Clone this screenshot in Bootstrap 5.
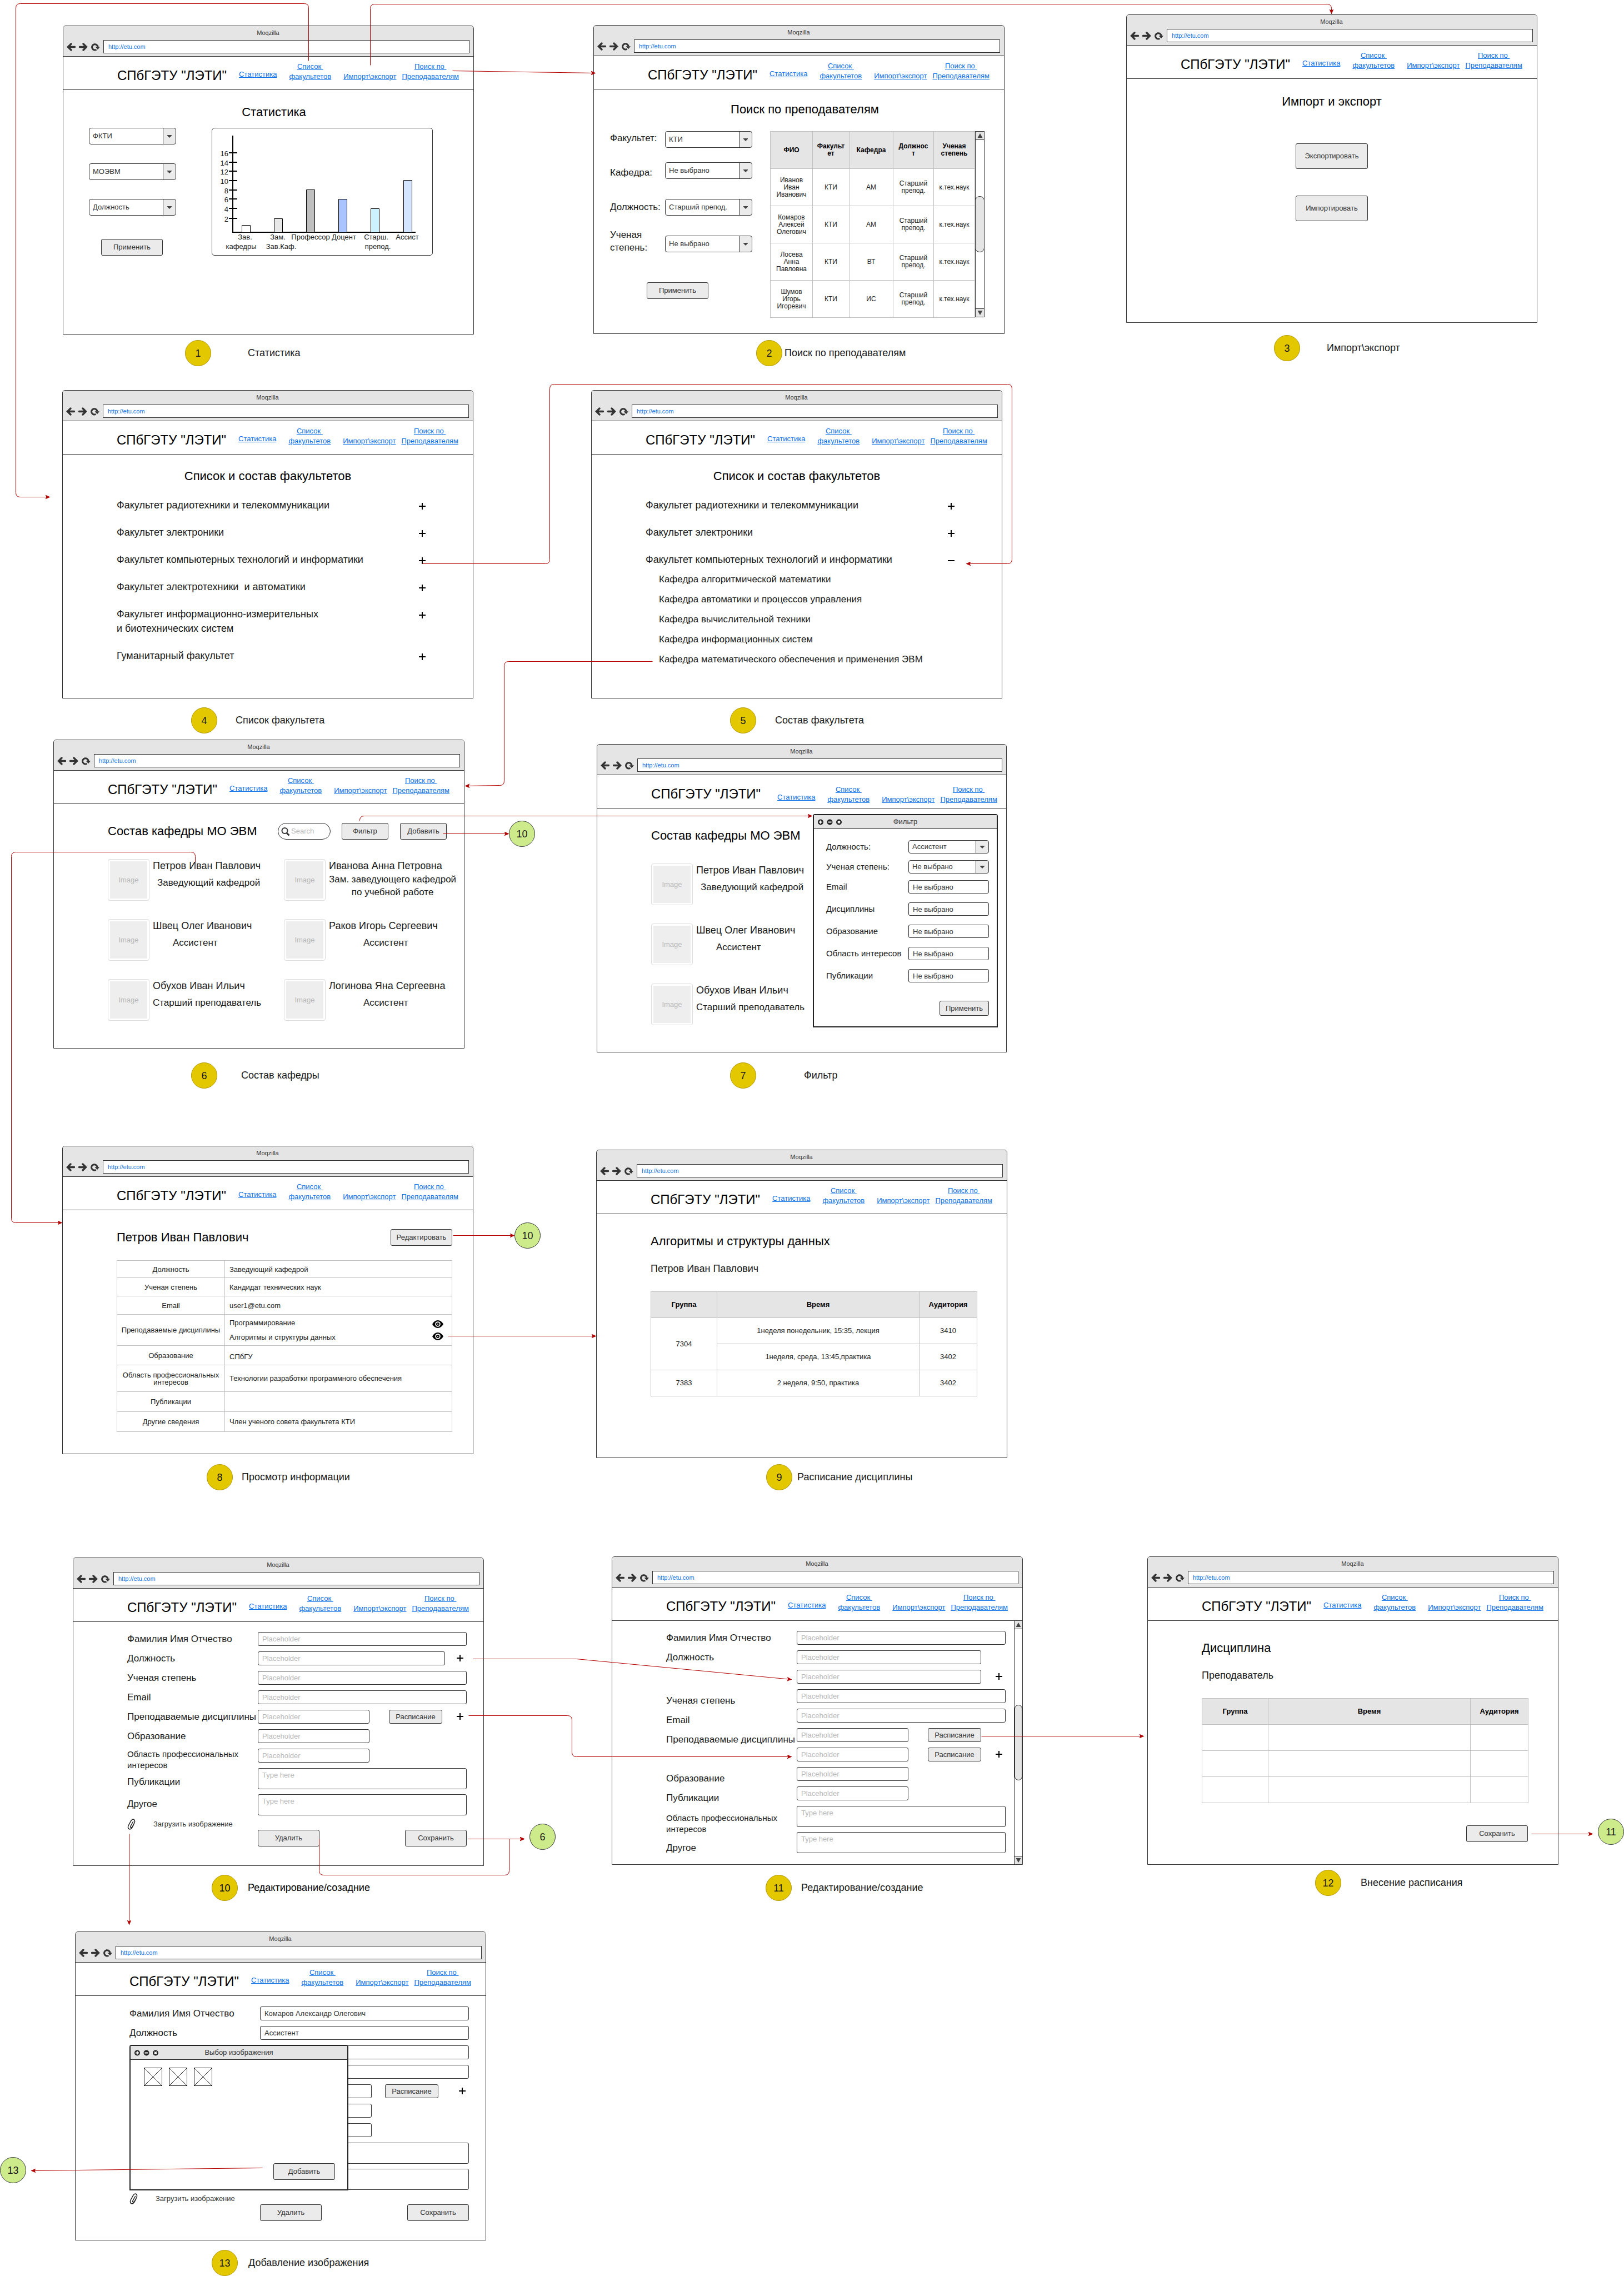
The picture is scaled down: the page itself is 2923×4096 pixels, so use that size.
<!DOCTYPE html>
<html lang="ru">
<head>
<meta charset="utf-8">
<meta name="viewport" content="width=device-width, initial-scale=1">
<title>Макеты экранов</title>
<link href="https://cdn.jsdelivr.net/npm/bootstrap@5.3.0/dist/css/bootstrap.min.css" rel="stylesheet">
<style>
:root{--ink:#333;--face:#ebebeb;--chrome:#e5e5e5;--rule:#c0c0c0;--url:#0a70e8}
body{font-family:"Liberation Sans",Arial,sans-serif;font-size:13px;line-height:18px;color:#1a1a1a;background:#fff}
.board{position:relative;min-height:4096px;overflow:hidden}
svg{display:block;flex:none}
button{font-family:inherit}

/* browser windows on the canvas */
.win{position:absolute;width:740px;height:555px;border:1px solid var(--ink);border-radius:5px 5px 0 0;background:#fff;--bs-card-cap-bg:var(--chrome)}
#w1{left:113px;top:46px;height:556px} #w2{left:1068px;top:45px;height:556px} #w3{left:2027px;top:26px}
#w4{left:112px;top:702px} #w5{left:1064px;top:702px}
#w6{left:96px;top:1331px;height:556px} #w7{left:1074px;top:1339px;width:738px}
#w8{left:112px;top:2062px} #w9{left:1073px;top:2069px}
#w10{left:131px;top:2803px} #w11{left:1101px;top:2801px} #w12{left:2065px;top:2801px}
#w13{left:135px;top:3476px;height:556px}
.win>.card-header{padding:0 7px 5px 6px;border-bottom:1px solid var(--ink);border-radius:4px 4px 0 0}
.win-title{height:25px;line-height:25px;font-size:11px;text-align:center;color:var(--ink)}
.tools{gap:6px;height:24px}
.ico{border:0;background:none;padding:0;color:var(--ink)}
.win .address{height:24px;min-height:0;padding:0 8px;border:1px solid var(--ink);border-radius:0;font-size:11px;color:var(--url);background:#fff}
.site{height:60px;padding:0 0 14px 97px;border-bottom:1px solid var(--ink);gap:22px;flex:none}
.logo{font-size:24px;line-height:20px;padding-bottom:1px;color:#000;text-decoration:none;white-space:nowrap}
.site a:not(.logo){color:var(--url);text-decoration:underline;text-align:center;white-space:nowrap;line-height:18px}
.site a.tight{margin-left:-12px}
.site a.first{padding-bottom:4px}
#w7 .site{padding-bottom:6px}
#w7 .logo{padding-bottom:9px;margin-right:8px}

/* text levels */
.t-page{font-size:22px;line-height:28px;font-weight:400;margin:0;color:#000}
.t-sub{font-size:18px;line-height:24px;font-weight:400;margin:0;color:#1a1a1a}

/* controls */
.win .btn{--bs-btn-font-size:13px;--bs-btn-line-height:18px;--bs-btn-padding-x:0;--bs-btn-padding-y:0;--bs-btn-color:#333;--bs-btn-bg:var(--face);--bs-btn-border-color:var(--ink);--bs-btn-border-radius:3px;width:111px;height:30px;flex:none}
.win .field{height:25px;min-height:0;padding:0 7px;border:1px solid var(--ink);border-radius:3px;font-size:13px;line-height:18px;color:#333;background-color:#fff}
.win .field::placeholder{color:#b8b8b8}
.win textarea.field{height:38px;padding-top:3px;resize:none;overflow:hidden}
.win .pick{height:30px;min-height:0;padding:0 26px 0 6px;border:1px solid var(--ink);border-radius:4px;font-size:13px;color:#333;
 background:url("data:image/svg+xml,%3Csvg xmlns='http://www.w3.org/2000/svg' width='22' height='10'%3E%3Cpath d='M7 3h8v1l-4 4-4-4z' fill='%23444'/%3E%3C/svg%3E") right center/22px 10px no-repeat,
 linear-gradient(#333,#333) right 22px top 0/1px 100% no-repeat,
 linear-gradient(#ebebeb,#ebebeb) right top/22px 100% no-repeat #fff}
.plus{border:0;background:none;padding:0;width:14px;height:14px;color:#000;flex:none}

/* bars and tables */
.sbar{width:17px;border:1px solid var(--ink);background:#fff;flex:none}
.sbar button{border:0;padding:0;height:15px;width:100%;background:var(--chrome)}
.sbar button:first-child{border-bottom:1px solid var(--ink)}
.sbar button:last-child{border-top:1px solid var(--ink);margin-top:auto}
.sbar button svg{margin:auto}
.sbar i{border:1px solid var(--ink);border-radius:8px;background:var(--chrome);margin:101px -1px 0;height:101px}
.grid{border-collapse:collapse;table-layout:fixed;margin:0;color:#1a1a1a}
.grid th,.grid td{border:1px solid var(--rule);padding:0;text-align:center;vertical-align:middle}
.grid thead th{background:var(--chrome);font-weight:700;color:#000}

/* statistics */
.stat{padding:26px 0 0 46px}
.stat .t-page,.find .t-page{text-align:center}
.stat .t-page{margin-left:-26px;margin-bottom:14px}
.stat form{width:157px;gap:34px;margin-right:64px}
.stat form .btn{margin:8px 0 0 22px}
.chart{border:1px solid var(--ink);border-radius:5px}

/* teacher search */
.find{padding:22px 0 0 29px}
.find .t-page{margin-left:-8px;margin-bottom:14px}
.find-labels{width:99px;gap:16px}
.find-labels label{height:46px;font-size:17px;line-height:23px;white-space:nowrap}
.find-picks{width:157px;padding-top:11px}
.find-picks .pick+.pick{margin-top:36px}
.find-picks .pick:nth-child(2){margin-top:26px}
.find .btn{margin:51px 0 0 66px}
.found{margin:11px 0 0 32px;height:335px}
.found .grid{width:368px;font-size:12px;line-height:13px}
.found thead tr{height:67px}
.found tbody tr{height:67px}

.port{padding-top:27px}
.port .btn{width:130px;height:46px;margin-top:48px}
.port .t-page+.btn{margin-top:61px}

/* faculties */
.facs{padding:25px 84px 0 97px}
.facs .t-page{text-align:center;margin:0 -84px 25px -97px}
.facs ul{list-style:none;margin:0;padding:0}
.facs>ul{display:grid;gap:23px}
.facs li{font-size:18px;line-height:26px}
.facs .plus{margin-top:8px}
.facs .deps li{font-size:17px;line-height:36px;white-space:nowrap}
.facs .deps{margin:5px 0 0 24px}

/* staff */
.staff{padding:34px 0 0 97px}
.staff-head{height:30px;padding-right:31px;margin-bottom:35px}
.win .staff-head .btn{width:84px}
.staff-head .btn+.btn{margin-left:21px}
.seek{width:95px;height:30px;border:1px solid var(--ink);border-radius:15px;padding:0 5px;gap:2px;margin-right:20px}
.seek input{border:0;padding:0;width:60px;font-size:13px;background:none}
.seek input::placeholder{color:#b8b8b8;opacity:1}
.people{display:grid;grid-template-columns:317px 1fr;gap:33px 0}
.person{gap:6px;height:75px}
.pic{width:75px;height:75px;flex:none;border:1px solid #ddd;border-radius:4px;padding:3px}
.pic span{display:grid;place-items:center;height:100%;background:#eee;color:#b8b8b8;font-size:13px}
.person .post{font-size:17px;line-height:23px;margin:7px 0 0;white-space:nowrap}
.person .t-sub{white-space:nowrap}
.person .post.two{margin-top:1px;text-align:center}
.in-s{padding-left:8px}.in-m{padding-left:36px}.in-l{padding-left:62px}

/* dialogs above a window */
.dlg{position:absolute;border:2px solid #222;border-radius:4px 4px 0 0;background:#fff}
.dlg-head{position:relative;height:25px;border-bottom:1px solid #222;background:var(--chrome);line-height:24px;text-align:center;color:#333}
.dlg-head .dots{position:absolute;left:6px;top:7px}
#filter{left:388px;top:125px;width:333px;height:384px}
#filter form{padding:20px 14px 0 22px;gap:12px}
#filter label{width:148px;font-size:15px;line-height:24px;white-space:nowrap;flex:none}
#filter .field,#filter .pick{height:24px}
#filter .spaced{margin-top:4px}
#filter .btn{width:89px;height:27px;margin-top:21px}
#images{left:97px;top:203px;width:394px;height:262px}
#images .thumbs{padding:14px 0 0 24px;gap:12px}
#images .btn{margin:auto 22px 17px auto}

/* teacher profile */
.profile{padding:34px 37px 0 97px}
.profile-head{height:30px;margin-bottom:26px}
.facts{width:100%;line-height:13px}
.facts th{font-weight:400;width:194px}
.facts td{text-align:left;padding-left:8px}
.facts .two-lines{line-height:26px}
.facts .two-lines svg{margin-right:15px}

/* timetable */
.times{padding:35px 54px 0 97px}
.times .t-sub{margin:23px 0 29px}
.times .grid{width:587px}
.times .grid tr{height:47px}
.times .btn{margin-top:40px}

/* edit form */
.edit{padding:18px 30px 0 97px;gap:10px}
.line{height:25px}
.line-tall{height:37px}
.line>label,.line-tall>label{width:235px;font-size:17px;line-height:25px;white-space:nowrap;flex:none}
.line>label.small-lbl,.line-tall>label.small-lbl{font-size:15px;line-height:20px}
label.drop5{padding-top:5px}label.drop8{padding-top:8px}label.drop12{padding-top:12px}label.drop16{padding-top:16px}
.win .w-post{width:337px}
.win .w-half{width:201px;flex:none}
.win .line .btn{width:96px;height:25px;margin-left:35px}
.line .plus{margin:5px 5px 0 auto}
.attach{border:0;background:none;padding:0;width:235px;height:20px;gap:32px;color:#333;flex:none}
.edit-end{margin-top:-3px}
.edit-end .btn{margin-top:20px}
#w11 .edit{padding:18px 15px 0 97px}
#w11 .w-post{width:332px}
#w11 .sbar{width:15px;border-width:0 0 0 1px}
#w11 .sbar i{margin:136px 0 0;height:136px}
#w13 .edit{padding-top:19px}
#w13 .line .btn{margin-left:24px}

/* captions and links to other screens */
.tag{position:absolute;font-size:18px;line-height:47px;white-space:nowrap;color:#1a1a1a}
.num{width:47px;height:47px;border:1px solid #b09500;border-radius:50%;background:#e3c800;text-align:center;line-height:47px;flex:none}
.num.go{position:absolute;font-size:18px;background:#cdeb8b;border-color:#36393d}
#t1{left:333px;top:612px;gap:66px} #t2{left:1361px;top:612px;gap:4px} #t3{left:2293px;top:603px;gap:48px}
#t4{left:344px;top:1273px;gap:33px} #t5{left:1314px;top:1273px;gap:34px}
#t6{left:344px;top:1912px;gap:43px} #t7{left:1314px;top:1912px;gap:86px}
#t8{left:372px;top:2635px;gap:16px} #t9{left:1379px;top:2635px;gap:9px}
#t10{left:381px;top:3374px;gap:18px;color:#000} #t11{left:1378px;top:3374px;gap:17px} #t12{left:2367px;top:3365px;gap:35px}
#t13{left:381px;top:4049px;gap:19px}
#g10a{left:916px;top:1477px} #g10b{left:926px;top:2200px} #g6{left:953px;top:3282px} #g11{left:2876px;top:3273px} #g13{left:0;top:3882px}
.arrows{position:absolute;left:0;top:0;pointer-events:none}
</style>
<script src="https://cdn.jsdelivr.net/npm/bootstrap@5.3.0/dist/js/bootstrap.bundle.min.js"></script>
</head>
<body>
<svg width="0" height="0" class="position-absolute" aria-hidden="true">
 <symbol id="i-back" viewBox="0 0 16 15"><path d="M8 2 2.500 7.500 8 13M3 7.500h11.500" fill="none" stroke="currentColor" stroke-width="3.400" stroke-linecap="round"/></symbol>
 <symbol id="i-fwd" viewBox="0 0 16 15"><path d="M8 2l5.500 5.500L8 13M13 7.500H1.500" fill="none" stroke="currentColor" stroke-width="3.400" stroke-linecap="round"/></symbol>
 <symbol id="i-load" viewBox="0 0 16 15"><path d="M9.500 12.300A5.200 5.200 0 1 1 12 7.500" fill="none" stroke="currentColor" stroke-width="3"/><path d="M7.500 7.200H16l-4 5z" fill="currentColor"/></symbol>
 <symbol id="i-plus" viewBox="0 0 14 14"><path d="M1 7h12M7 1v12" stroke="currentColor" stroke-width="2"/></symbol>
 <symbol id="i-minus" viewBox="0 0 14 14"><path d="M1 7h12" stroke="currentColor" stroke-width="2"/></symbol>
 <symbol id="i-up" viewBox="0 0 10 8"><path d="M5 0l4.500 8h-9z" fill="#444"/></symbol>
 <symbol id="i-down" viewBox="0 0 10 8"><path d="M5 8L.5 0h9z" fill="#444"/></symbol>
 <symbol id="i-eye" viewBox="0 0 20 14"><path d="M0 7Q4 0 10 0t10 7q-4 7-10 7T0 7z"/><circle cx="10" cy="7" r="4.800" fill="#fff"/><circle cx="10" cy="7" r="3"/><circle cx="10" cy="7" r="1" fill="#fff"/></symbol>
 <symbol id="i-clip" viewBox="0 0 15 20"><path d="M10.500 5.500 6 13.500q-.8 2 .5 2.500t2.300-1L13 7.500Q14.500 3 12 1.500T7 3.500L2.300 12Q.3 16.500 3 18.300t5.300-1.500L11.500 11" fill="none" stroke="#222" stroke-width="1.500" stroke-linecap="round"/></symbol>
 <symbol id="i-dots" viewBox="0 0 46 11"><g fill="#222"><circle cx="6" cy="5.500" r="5"/><circle cx="22.500" cy="5.500" r="5"/><circle cx="39" cy="5.500" r="5"/></g><path d="M3 5.500h6M6 2.500v6M19.500 5.500h6M37 3.500l4 4M41 3.500l-4 4" stroke="#fff" stroke-width="1.800"/></symbol>
 <symbol id="i-cross" viewBox="0 0 33 33"><path d="M.5.5h32v32H.5zM.5.5l32 32M32.500.5l-32 32" fill="none" stroke="#222"/></symbol>
</svg>

<!-- title bar, address bar and site menu shared by every window -->
<template id="browser">
 <div class="card-header"><div class="win-title">Moqzilla</div>
  <div class="tools d-flex align-items-center">
   <button class="ico" aria-label="Назад"><svg width="16" height="15"><use href="#i-back"/></svg></button>
   <button class="ico" aria-label="Вперёд"><svg width="16" height="15"><use href="#i-fwd"/></svg></button>
   <button class="ico" aria-label="Обновить"><svg width="16" height="15"><use href="#i-load"/></svg></button>
   <input class="form-control address" aria-label="Адрес" value="http://etu.com">
  </div>
 </div>
 <nav class="site d-flex align-items-end"><a class="logo" href="#w1">СПбГЭТУ "ЛЭТИ"</a><a class="first" href="#w1">Статистика</a><a href="#w4">Список&nbsp;<br>факультетов</a><a href="#w3">Импорт\экспорт</a><a class="tight" href="#w2">Поиск по&nbsp;<br>Преподавателям</a></nav>
</template>

<main class="board">

<section class="card win" id="w1">
 <div class="stat">
  <h2 class="t-page">Статистика</h2>
  <div class="d-flex">
   <form class="d-flex flex-column">
    <select class="form-select pick" aria-label="Факультет"><option>ФКТИ</option></select>
    <select class="form-select pick" aria-label="Кафедра"><option>МОЭВМ</option></select>
    <select class="form-select pick" aria-label="Должность"><option>Должность</option></select>
    <button type="button" class="btn">Применить</button>
   </form>
   <svg class="chart" width="398" height="230" font-size="13" fill="#1a1a1a">
    <path d="M37 13v174h329M30 44h15M30 61h15M30 77h15M30 94h15M30 111h15M30 127h15M30 144h15M30 162h15" fill="none" stroke="#000" stroke-width="2"/>
    <g text-anchor="end"><text x="29" y="50">16</text><text x="29" y="67">14</text><text x="29" y="83">12</text><text x="29" y="100">10</text><text x="29" y="117">8</text><text x="29" y="133">6</text><text x="29" y="150">4</text><text x="29" y="168">2</text></g>
    <g stroke="#000"><path d="M53.500 174.500h15v13h-15z" fill="#fff"/><path d="M111.500 162.500h15v25h-15z" fill="#e8e8e8"/><path d="M169.500 110.500h15v77h-15z" fill="#bfbfbf"/><path d="M227.500 127.500h15v60h-15z" fill="#a9c4ff"/><path d="M285.500 144.500h15v43h-15z" fill="#ccf2ff"/><path d="M344.500 93.500h15v94h-15z" fill="#d4e5ff"/></g>
    <g text-anchor="middle"><text x="59" y="200">Зав.</text><text x="52" y="217">кафедры</text><text x="118" y="200">Зам.</text><text x="124" y="217">Зав.Каф.</text><text x="177" y="200">Профессор</text><text x="237" y="200">Доцент</text><text x="295" y="200">Старш.</text><text x="298" y="217">препод.</text><text x="351" y="200">Ассист</text></g>
   </svg>
  </div>
 </div>
</section>

<section class="card win" id="w2">
 <div class="find">
  <h2 class="t-page">Поиск по преподавателям</h2>
  <div class="d-flex align-items-start">
   <form>
    <div class="d-flex">
     <div class="find-labels d-flex flex-column">
      <label class="d-flex align-items-center" for="f1">Факультет:</label>
      <label class="d-flex align-items-center" for="f2">Кафедра:</label>
      <label class="d-flex align-items-center" for="f3">Должность:</label>
      <label class="d-flex align-items-center" for="f4"><span>Ученая<br>степень:</span></label>
     </div>
     <div class="find-picks">
      <select class="form-select pick" id="f1"><option>КТИ</option></select>
      <select class="form-select pick" id="f2"><option>Не выбрано</option></select>
      <select class="form-select pick" id="f3"><option>Старший препод.</option></select>
      <select class="form-select pick" id="f4"><option>Не выбрано</option></select>
     </div>
    </div>
    <button type="button" class="btn">Применить</button>
   </form>
   <div class="found d-flex">
    <table class="grid">
     <colgroup><col width="76"><col width="66"><col width="79"><col width="73"><col width="74"></colgroup>
     <thead><tr><th>ФИО</th><th>Факульт<br>ет</th><th>Кафедра</th><th>Должнос<br>т</th><th>Ученая<br>степень</th></tr></thead>
     <tbody>
      <tr><td>Иванов<br>Иван<br>Иванович</td><td>КТИ</td><td>АМ</td><td>Старший<br>препод.</td><td>к.тех.наук</td></tr>
      <tr><td>Комаров<br>Алексей<br>Олегович</td><td>КТИ</td><td>АМ</td><td>Старший<br>препод.</td><td>к.тех.наук</td></tr>
      <tr><td>Лосева<br>Анна<br>Павловна</td><td>КТИ</td><td>ВТ</td><td>Старший<br>препод.</td><td>к.тех.наук</td></tr>
      <tr><td>Шумов<br>Игорь<br>Игоревич</td><td>КТИ</td><td>ИС</td><td>Старший<br>препод.</td><td>к.тех.наук</td></tr>
     </tbody>
    </table>
    <div class="sbar d-flex flex-column"><button aria-label="Вверх"><svg width="10" height="8"><use href="#i-up"/></svg></button><i></i><button aria-label="Вниз"><svg width="10" height="8"><use href="#i-down"/></svg></button></div>
   </div>
  </div>
 </div>
</section>

<section class="card win" id="w3">
 <div class="port d-flex flex-column align-items-center">
  <h2 class="t-page">Импорт и экспорт</h2>
  <button class="btn">Экспортировать</button>
  <button class="btn">Импортировать</button>
 </div>
</section>

<section class="card win" id="w4">
 <div class="facs">
  <h2 class="t-page">Список и состав факультетов</h2>
  <ul>
   <li class="d-flex justify-content-between">Факультет радиотехники и телекоммуникации<button class="plus" aria-label="Развернуть"><svg width="14" height="14"><use href="#i-plus"/></svg></button></li>
   <li class="d-flex justify-content-between">Факультет электроники<button class="plus" aria-label="Развернуть"><svg width="14" height="14"><use href="#i-plus"/></svg></button></li>
   <li class="d-flex justify-content-between">Факультет компьютерных технологий и информатики<button class="plus" aria-label="Развернуть"><svg width="14" height="14"><use href="#i-plus"/></svg></button></li>
   <li class="d-flex justify-content-between">Факультет электротехники&nbsp; и автоматики<button class="plus" aria-label="Развернуть"><svg width="14" height="14"><use href="#i-plus"/></svg></button></li>
   <li class="d-flex justify-content-between"><span>Факультет информационно-измерительных<br>и биотехнических систем</span><button class="plus" aria-label="Развернуть"><svg width="14" height="14"><use href="#i-plus"/></svg></button></li>
   <li class="d-flex justify-content-between">Гуманитарный факультет<button class="plus" aria-label="Развернуть"><svg width="14" height="14"><use href="#i-plus"/></svg></button></li>
  </ul>
 </div>
</section>

<section class="card win" id="w5">
 <div class="facs">
  <h2 class="t-page">Список и состав факультетов</h2>
  <ul>
   <li class="d-flex justify-content-between">Факультет радиотехники и телекоммуникации<button class="plus" aria-label="Развернуть"><svg width="14" height="14"><use href="#i-plus"/></svg></button></li>
   <li class="d-flex justify-content-between">Факультет электроники<button class="plus" aria-label="Развернуть"><svg width="14" height="14"><use href="#i-plus"/></svg></button></li>
   <li><div class="d-flex justify-content-between">Факультет компьютерных технологий и информатики<button class="plus" aria-label="Свернуть"><svg width="14" height="14"><use href="#i-minus"/></svg></button></div>
    <ul class="deps"><li>Кафедра алгоритмической математики</li><li>Кафедра автоматики и процессов управления</li><li>Кафедра вычислительной техники</li><li>Кафедра информационных систем</li><li>Кафедра математического обеспечения и применения ЭВМ</li></ul></li>
  </ul>
 </div>
</section>

<section class="card win" id="w6">
 <div class="staff">
  <div class="staff-head d-flex align-items-center">
   <h2 class="t-page flex-grow-1">Состав кафедры МО ЭВМ</h2>
   <div class="seek d-flex align-items-center"><svg width="16" height="17" fill="none" stroke="#333" stroke-width="2"><circle cx="6.500" cy="7" r="5"/><path d="M10 11l4.500 4.500" stroke-width="3"/></svg><input type="search" placeholder="Search" aria-label="Поиск"></div>
   <button class="btn">Фильтр</button><button class="btn">Добавить</button>
  </div>
  <div class="people">
   <div class="person d-flex"><div class="pic"><span>Image</span></div><div><h3 class="t-sub">Петров Иван Павлович</h3><p class="post in-s">Заведующий кафедрой</p></div></div>
   <div class="person d-flex"><div class="pic"><span>Image</span></div><div><h3 class="t-sub">Иванова Анна Петровна</h3><p class="post two">Зам. заведующего кафедрой<br>по учебной работе</p></div></div>
   <div class="person d-flex"><div class="pic"><span>Image</span></div><div><h3 class="t-sub">Швец Олег Иванович</h3><p class="post in-m">Ассистент</p></div></div>
   <div class="person d-flex"><div class="pic"><span>Image</span></div><div><h3 class="t-sub">Раков Игорь Сергеевич</h3><p class="post in-l">Ассистент</p></div></div>
   <div class="person d-flex"><div class="pic"><span>Image</span></div><div><h3 class="t-sub">Обухов Иван Ильич</h3><p class="post">Старший преподаватель</p></div></div>
   <div class="person d-flex"><div class="pic"><span>Image</span></div><div><h3 class="t-sub">Логинова Яна Сергеевна</h3><p class="post in-l">Ассистент</p></div></div>
  </div>
 </div>
</section>

<section class="card win" id="w7">
 <div class="staff">
  <div class="staff-head d-flex align-items-center"><h2 class="t-page">Состав кафедры МО ЭВМ</h2></div>
  <div class="people">
   <div class="person d-flex"><div class="pic"><span>Image</span></div><div><h3 class="t-sub">Петров Иван Павлович</h3><p class="post in-s">Заведующий кафедрой</p></div></div><div></div>
   <div class="person d-flex"><div class="pic"><span>Image</span></div><div><h3 class="t-sub">Швец Олег Иванович</h3><p class="post in-m">Ассистент</p></div></div><div></div>
   <div class="person d-flex"><div class="pic"><span>Image</span></div><div><h3 class="t-sub">Обухов Иван Ильич</h3><p class="post">Старший преподаватель</p></div></div><div></div>
  </div>
 </div>
 <div class="dlg" id="filter" role="dialog" aria-label="Фильтр">
  <div class="dlg-head"><svg class="dots" width="46" height="11"><use href="#i-dots"/></svg>Фильтр</div>
  <form class="d-flex flex-column">
   <div class="d-flex"><label for="q1">Должность:</label><select class="form-select pick" id="q1"><option>Ассистент</option></select></div>
   <div class="d-flex"><label for="q2">Ученая степень:</label><select class="form-select pick" id="q2"><option>Не выбрано</option></select></div>
   <div class="d-flex"><label for="q3">Email</label><input class="form-control field" id="q3" value="Не выбрано"></div>
   <div class="d-flex spaced"><label for="q4">Дисциплины</label><input class="form-control field" id="q4" value="Не выбрано"></div>
   <div class="d-flex spaced"><label for="q5">Образование</label><input class="form-control field" id="q5" value="Не выбрано"></div>
   <div class="d-flex spaced"><label for="q6">Область интересов</label><input class="form-control field" id="q6" value="Не выбрано"></div>
   <div class="d-flex spaced"><label for="q7">Публикации</label><input class="form-control field" id="q7" value="Не выбрано"></div>
   <button type="button" class="btn align-self-end">Применить</button>
  </form>
 </div>
</section>

<section class="card win" id="w8">
 <div class="profile">
  <div class="profile-head d-flex align-items-center justify-content-between"><h2 class="t-page">Петров Иван Павлович</h2><button class="btn">Редактировать</button></div>
  <table class="grid facts">
   <tr height="31"><th>Должность</th><td>Заведующий кафедрой</td></tr>
   <tr height="33"><th>Ученая степень</th><td>Кандидат технических наук</td></tr>
   <tr height="33"><th>Email</th><td>user1@etu.com</td></tr>
   <tr height="56"><th>Преподаваемые дисциплины</th><td class="two-lines"><div class="d-flex justify-content-between align-items-center">Программирование<svg class="mt-1" width="20" height="14"><use href="#i-eye"/></svg></div><div class="d-flex justify-content-between align-items-center">Алгоритмы и структуры данных<svg class="mb-1" width="20" height="14"><use href="#i-eye"/></svg></div></td></tr>
   <tr height="35"><th>Образование</th><td class="pt-1">СПбГУ</td></tr>
   <tr height="48"><th>Область профессиональных<br>интересов</th><td>Технологии разработки программного обеспечения</td></tr>
   <tr height="36"><th>Публикации</th><td></td></tr>
   <tr height="36"><th>Другие сведения</th><td>Член ученого совета факультета КТИ</td></tr>
  </table>
 </div>
</section>

<section class="card win" id="w9">
 <div class="times">
  <h2 class="t-page">Алгоритмы и структуры данных</h2>
  <h3 class="t-sub">Петров Иван Павлович</h3>
  <table class="grid">
   <colgroup><col width="119"><col width="364"><col width="104"></colgroup>
   <thead><tr><th>Группа</th><th>Время</th><th>Аудитория</th></tr></thead>
   <tbody>
    <tr><td rowspan="2">7304</td><td>1неделя понедельник, 15:35, лекция</td><td>3410</td></tr>
    <tr><td>1неделя, среда, 13:45,практика</td><td>3402</td></tr>
    <tr><td>7383</td><td>2 неделя, 9:50, практика</td><td>3402</td></tr>
   </tbody>
  </table>
 </div>
</section>

<section class="card win" id="w10">
 <form class="edit d-flex flex-column">
  <div class="line d-flex"><label for="a1">Фамилия Имя Отчество</label><input class="form-control field" id="a1" placeholder="Placeholder"></div>
  <div class="line d-flex"><label for="a2">Должность</label><input class="form-control field w-post" id="a2" placeholder="Placeholder"><button type="button" class="plus" aria-label="Добавить"><svg width="14" height="14"><use href="#i-plus"/></svg></button></div>
  <div class="line d-flex"><label for="a3">Ученая степень</label><input class="form-control field" id="a3" placeholder="Placeholder"></div>
  <div class="line d-flex"><label for="a4">Email</label><input class="form-control field" id="a4" placeholder="Placeholder"></div>
  <div class="line d-flex"><label for="a5">Преподаваемые дисциплины</label><input class="form-control field w-half" id="a5" placeholder="Placeholder"><button type="button" class="btn">Расписание</button><button type="button" class="plus" aria-label="Добавить"><svg width="14" height="14"><use href="#i-plus"/></svg></button></div>
  <div class="line d-flex"><label for="a6">Образование</label><input class="form-control field w-half" id="a6" placeholder="Placeholder"></div>
  <div class="line d-flex"><label class="small-lbl" for="a7">Область профессиональных<br>интересов</label><input class="form-control field w-half" id="a7" placeholder="Placeholder"></div>
  <div class="line-tall d-flex"><label class="drop12" for="a8">Публикации</label><textarea class="form-control field" id="a8" placeholder="Type here"></textarea></div>
  <div class="line-tall d-flex"><label class="drop5" for="a9">Другое</label><textarea class="form-control field" id="a9" placeholder="Type here"></textarea></div>
  <div class="edit-end d-flex"><button type="button" class="attach d-flex align-items-center"><svg width="15" height="20"><use href="#i-clip"/></svg>Загрузить изображение</button><button type="button" class="btn">Удалить</button><button type="button" class="btn ms-auto">Сохранить</button></div>
 </form>
</section>

<section class="card win" id="w11">
 <div class="d-flex flex-grow-1">
  <form class="edit d-flex flex-column flex-grow-1">
   <div class="line d-flex"><label for="b1">Фамилия Имя Отчество</label><input class="form-control field" id="b1" placeholder="Placeholder"></div>
   <div class="line d-flex"><label for="b2">Должность</label><input class="form-control field w-post" id="b2" placeholder="Placeholder"></div>
   <div class="line d-flex"><label for="b3"></label><input class="form-control field w-post" id="b3" aria-label="Вторая должность" placeholder="Placeholder"><button type="button" class="plus" aria-label="Добавить"><svg width="14" height="14"><use href="#i-plus"/></svg></button></div>
   <div class="line d-flex"><label class="drop8" for="b4">Ученая степень</label><input class="form-control field" id="b4" placeholder="Placeholder"></div>
   <div class="line d-flex"><label class="drop8" for="b5">Email</label><input class="form-control field" id="b5" placeholder="Placeholder"></div>
   <div class="line d-flex"><label class="drop8" for="b6">Преподаваемые дисциплины</label><input class="form-control field w-half" id="b6" placeholder="Placeholder"><button type="button" class="btn">Расписание</button></div>
   <div class="line d-flex"><label for="b7"></label><input class="form-control field w-half" id="b7" aria-label="Вторая дисциплина" placeholder="Placeholder"><button type="button" class="btn">Расписание</button><button type="button" class="plus" aria-label="Добавить"><svg width="14" height="14"><use href="#i-plus"/></svg></button></div>
   <div class="line d-flex"><label class="drop8" for="b8">Образование</label><input class="form-control field w-half" id="b8" placeholder="Placeholder"></div>
   <div class="line d-flex"><label class="drop8" for="b9">Публикации</label><input class="form-control field w-half" id="b9" placeholder="Placeholder"></div>
   <div class="line-tall d-flex"><label class="small-lbl drop12" for="b10">Область профессиональных<br>интересов</label><textarea class="form-control field" id="b10" placeholder="Type here"></textarea></div>
   <div class="line-tall d-flex"><label class="drop16" for="b11">Другое</label><textarea class="form-control field" id="b11" placeholder="Type here"></textarea></div>
  </form>
  <div class="sbar d-flex flex-column"><button aria-label="Вверх"><svg width="10" height="8"><use href="#i-up"/></svg></button><i></i><button aria-label="Вниз"><svg width="10" height="8"><use href="#i-down"/></svg></button></div>
 </div>
</section>

<section class="card win" id="w12">
 <div class="times d-flex flex-column">
  <h2 class="t-page">Дисциплина</h2>
  <h3 class="t-sub">Преподаватель</h3>
  <table class="grid">
   <colgroup><col width="119"><col width="364"><col width="104"></colgroup>
   <thead><tr><th>Группа</th><th>Время</th><th>Аудитория</th></tr></thead>
   <tbody><tr><td></td><td></td><td></td></tr><tr><td></td><td></td><td></td></tr><tr><td></td><td></td><td></td></tr></tbody>
  </table>
  <button class="btn align-self-end">Сохранить</button>
 </div>
</section>

<section class="card win" id="w13">
 <form class="edit d-flex flex-column">
  <div class="line d-flex"><label for="c1">Фамилия Имя Отчество</label><input class="form-control field" id="c1" value="Комаров Александр Олегович"></div>
  <div class="line d-flex"><label for="c2">Должность</label><input class="form-control field" id="c2" value="Ассистент"></div>
  <div class="line d-flex"><label for="c3"></label><input class="form-control field" id="c3" aria-label="Ученая степень"></div>
  <div class="line d-flex"><label for="c4"></label><input class="form-control field" id="c4" aria-label="Email"></div>
  <div class="line d-flex"><label for="c5"></label><input class="form-control field w-half" id="c5" aria-label="Преподаваемые дисциплины"><button type="button" class="btn">Расписание</button><button type="button" class="plus" aria-label="Добавить"><svg width="14" height="14"><use href="#i-plus"/></svg></button></div>
  <div class="line d-flex"><label for="c6"></label><input class="form-control field w-half" id="c6" aria-label="Образование"></div>
  <div class="line d-flex"><label for="c7"></label><input class="form-control field w-half" id="c7" aria-label="Область интересов"></div>
  <div class="line-tall d-flex"><label for="c8"></label><textarea class="form-control field" id="c8" aria-label="Публикации"></textarea></div>
  <div class="line-tall d-flex"><label for="c9"></label><textarea class="form-control field" id="c9" aria-label="Другое"></textarea></div>
  <div class="edit-end d-flex"><button type="button" class="attach d-flex align-items-center"><svg width="15" height="20"><use href="#i-clip"/></svg>Загрузить изображение</button><button type="button" class="btn">Удалить</button><button type="button" class="btn ms-auto">Сохранить</button></div>
 </form>
 <div class="dlg d-flex flex-column" id="images" role="dialog" aria-label="Выбор изображения">
  <div class="dlg-head"><svg class="dots" width="46" height="11"><use href="#i-dots"/></svg>Выбор изображения</div>
  <div class="thumbs d-flex"><svg width="33" height="33"><use href="#i-cross"/></svg><svg width="33" height="33"><use href="#i-cross"/></svg><svg width="33" height="33"><use href="#i-cross"/></svg></div>
  <button class="btn">Добавить</button>
 </div>
</section>

<div class="tag d-flex" id="t1"><span class="num">1</span>Статистика</div>
<div class="tag d-flex" id="t2"><span class="num">2</span>Поиск по преподавателям</div>
<div class="tag d-flex" id="t3"><span class="num">3</span>Импорт\экспорт</div>
<div class="tag d-flex" id="t4"><span class="num">4</span>Список факультета</div>
<div class="tag d-flex" id="t5"><span class="num">5</span>Состав факультета</div>
<div class="tag d-flex" id="t6"><span class="num">6</span>Состав кафедры</div>
<div class="tag d-flex" id="t7"><span class="num">7</span>Фильтр</div>
<div class="tag d-flex" id="t8"><span class="num">8</span>Просмотр информации</div>
<div class="tag d-flex" id="t9"><span class="num">9</span>Расписание дисциплины</div>
<div class="tag d-flex" id="t10"><span class="num">10</span>Редактирование/созадние</div>
<div class="tag d-flex" id="t11"><span class="num">11</span>Редактирование/создание</div>
<div class="tag d-flex" id="t12"><span class="num">12</span>Внесение расписания</div>
<div class="tag d-flex" id="t13"><span class="num">13</span>Добавление изображения</div>
<span class="num go" id="g10a">10</span>
<span class="num go" id="g10b">10</span>
<span class="num go" id="g6">6</span>
<span class="num go" id="g11">11</span>
<span class="num go" id="g13">13</span>

<svg class="arrows" width="2923" height="4096" aria-hidden="true">
 <defs><marker id="tip" markerUnits="userSpaceOnUse" markerWidth="9" markerHeight="8" refX="8" refY="4" orient="auto"><path d="M0 0l9 4-9 4 2-4z" fill="#b20000"/></marker></defs>
 <g transform="translate(.5 .5)" fill="none" stroke="#b20000" marker-end="url(#tip)">
  <path d="M555 109V14q0-8-8-8H36q-8 0-8 8v872q0 8 8 8h53"/>
  <path d="M666 117V15q0-8 8-8h1714q8 0 8 8v9"/>
  <path d="M814 127l257 4"/>
  <path d="M760 1014h221q8 0 8-8V699q0-8 8-8h816q8 0 8 8v307q0 8-8 8h-74"/>
  <path d="M1174 1190H915q-8 0-8 8v207q0 8-8 8l-62 1"/>
  <path d="M351 1551v-10q0-8-8-8H28q-8 0-8 8v651q0 8 8 8h83"/>
  <path d="M647 1477v-1q0-8 8-8h806"/>
  <path d="M797 1500h118"/>
  <path d="M815 2223h110"/>
  <path d="M806 2404h266"/>
  <path d="M851 2985h186l387 37"/>
  <path d="M843 3087h178q8 0 8 8v58q0 8 8 8h387"/>
  <path d="M1766 3124h292"/>
  <path d="M2756 3300h110"/>
  <path d="M574 3309v57q0 8 8 8h326q8 0 8-8v-57h27"/>
  <path d="M842 3309h101"/>
  <path d="M232 3300v163"/>
  <path d="M472 3901l-416 5"/>
 </g>
</svg>
</main>
<script>
document.querySelectorAll('.win').forEach(function (w) {
  w.prepend(document.getElementById('browser').content.cloneNode(true));
});
</script>
</body>
</html>
